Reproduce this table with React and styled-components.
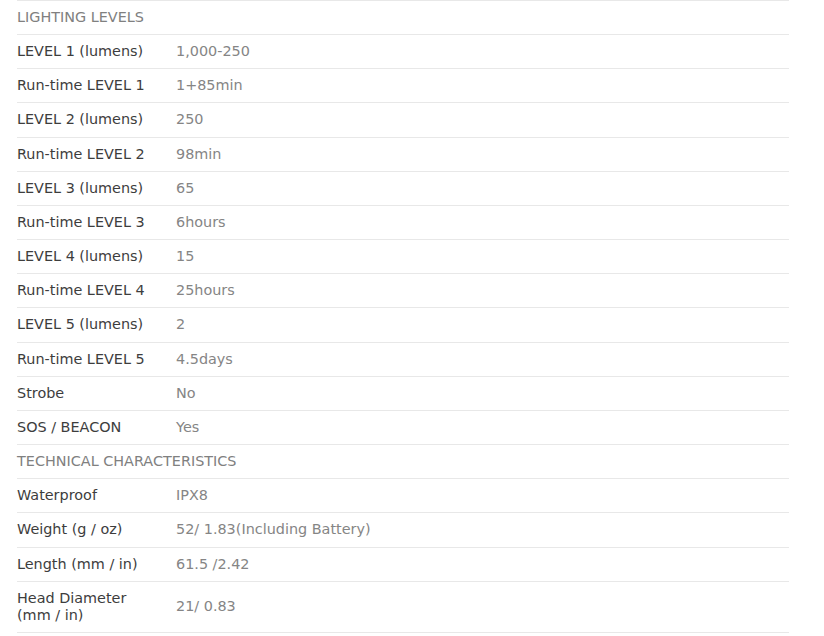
import React from "react";
import styled, { createGlobalStyle } from "styled-components";

const GlobalStyle = createGlobalStyle`
  body {
    margin: 0;
    background: #fff;
    font-family: "DejaVu Sans", "Noto Sans", sans-serif;
  }
`;

const specs = [
  { section: "LIGHTING LEVELS" },
  { label: "LEVEL 1 (lumens)", value: "1,000-250" },
  { label: "Run-time LEVEL 1", value: "1+85min" },
  { label: "LEVEL 2 (lumens)", value: "250" },
  { label: "Run-time LEVEL 2", value: "98min" },
  { label: "LEVEL 3 (lumens)", value: "65" },
  { label: "Run-time LEVEL 3", value: "6hours" },
  { label: "LEVEL 4 (lumens)", value: "15" },
  { label: "Run-time LEVEL 4", value: "25hours" },
  { label: "LEVEL 5 (lumens)", value: "2" },
  { label: "Run-time LEVEL 5", value: "4.5days" },
  { label: "Strobe", value: "No" },
  { label: "SOS / BEACON", value: "Yes" },
  { section: "TECHNICAL CHARACTERISTICS" },
  { label: "Waterproof", value: "IPX8" },
  { label: "Weight (g / oz)", value: "52/ 1.83(Including Battery)" },
  { label: "Length (mm / in)", value: "61.5 /2.42" },
  { label: "Head Diameter\n(mm / in)", value: "21/ 0.83" },
];

function App() {
  return (
    <>
      <GlobalStyle />
      <Specs>
        {specs.map((row, index) =>
          row.section ? (
            <Row key={index}>
              <Section>{row.section}</Section>
            </Row>
          ) : (
            <Row key={index}>
              <Label>{row.label}</Label>
              <Value>{row.value}</Value>
            </Row>
          )
        )}
      </Specs>
    </>
  );
}

const Specs = styled.div`
  width: 772px;
  margin-left: 17px;
  border-top: 1px solid #e8e8e8;
`;

const Row = styled.div`
  display: grid;
  grid-template-columns: 159px 1fr;
  align-items: center;
  padding: 8px 0;
  border-bottom: 1px solid #e8e8e8;
  font-size: 14.4px;
  line-height: 17.15px;
`;

const Section = styled.div`
  grid-column: 1 / -1;
  color: #808080;
  font-weight: 400;
  text-transform: uppercase;
`;

const Label = styled.div`
  color: #3d3d3d;
  font-weight: 500;
  white-space: pre-line;
  padding-right: 8px;
`;

const Value = styled.div`
  color: #858585;
  font-weight: 400;
`;

export default App;
